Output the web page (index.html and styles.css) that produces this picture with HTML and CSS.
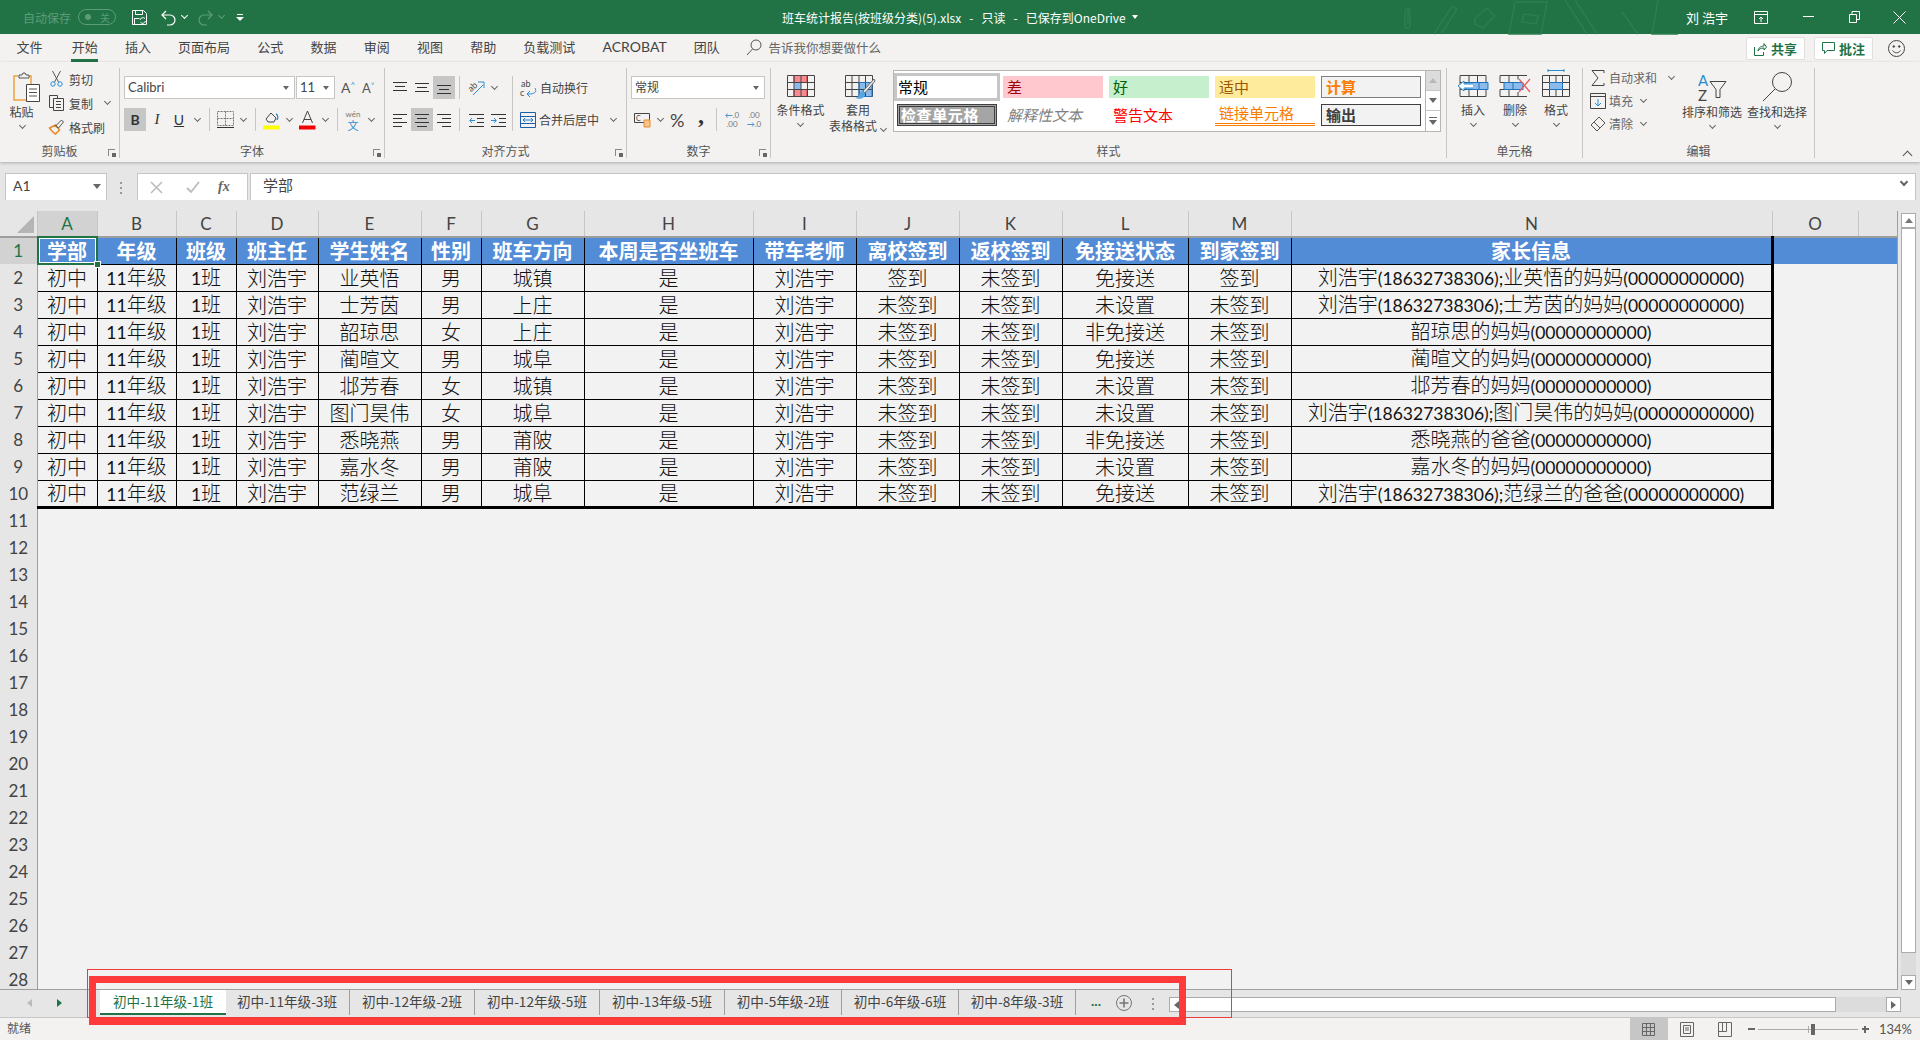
FILE: index.html
```html
<!DOCTYPE html>
<html lang="zh-CN">
<head>
    <meta charset="UTF-8">
    <meta name="viewport" content="width=device-width, initial-scale=1.0">
    <title>班车统计报告</title>
    <link rel="stylesheet" href="styles.css">
</head>
<body>
    <header class="titlebar">
        <svg class="doodles" width="330" height="34" viewBox="0 0 330 34" fill="none" stroke="#2c7d50" stroke-width="1.5">
            <path d="M10 8c-4 0-5 3-5 6v12c0 3 5 3 5 0V11c0-2-2-2-2 0v12"/>
            <path d="M34 34L52 6l5 3-16 25"/>
            <path d="M75 18l12-10 8 8-12 12-8-4z"/>
            <path d="M115 2h32l-6 32h-32z"/>
            <path d="M124 14l14 2-2 8-14-2z"/>
            <path d="M165 0l22 34M175 0l22 34"/>
            <path d="M222 12l16 22M258 0l-6 34h26"/>
        </svg>
        <div class="qat">
            <span class="autosave">自动保存</span>
            <span class="toggle"><i></i><b>关</b></span>
            <svg class="qat-save" width="17" height="17" viewBox="0 0 17 17" fill="none" stroke="#fff"><path d="M1.5 1.5h11l3 3v11h-14zM4.500 1.500v4h7v-4M3.500 15.500v-6h5"/><path d="M9 11a3 3 0 0 1 5-1.500M14.500 12a3 3 0 0 1-5 1.500" stroke="#fff"/></svg>
            <svg class="qat-undo" width="17" height="17" viewBox="0 0 17 17" fill="none" stroke="#fff" stroke-width="1.2"><path d="M6 2L2 6l4 4M2 6h8a4.500 4.500 0 0 1 0 10H7"/></svg>
            <span class="chev chev-w"></span>
            <svg class="qat-redo" width="17" height="17" viewBox="0 0 17 17" fill="none" stroke="#5d9c78" stroke-width="1.2"><path d="M11 2l4 4-4 4M15 6H7a4.500 4.500 0 0 0 0 10h3"/></svg>
            <span class="chev chev-dim"></span>
            <svg class="qat-more" width="8" height="8" viewBox="0 0 8 8" fill="#fff"><path d="M1 1h6v1H1zM0 4h8L4 8z"/></svg>
        </div>
        <div class="doc-title">班车统计报告(按班级分类)(5).xlsx&nbsp;&nbsp; - &nbsp;&nbsp;只读&nbsp;&nbsp; - &nbsp;&nbsp;已保存到OneDrive<svg width="6" height="4" viewBox="0 0 6 4" fill="#fff"><path d="M0 0h6L3 4z"/></svg></div>
        <div class="acct">
            <span class="acct-name">刘 浩宇</span>
            <svg class="acct-disp" width="15" height="13" viewBox="0 0 15 13" fill="none" stroke="#fff"><path d="M.5.5h13v12H.5zM.5 3.500h13M7 11V6M5 8l2-2 2 2"/></svg>
            <svg class="acct-min" width="11" height="2" viewBox="0 0 11 2" fill="#fff"><path d="M0 0h11v1H0z"/></svg>
            <svg class="acct-max" width="11" height="12" viewBox="0 0 11 12" fill="none" stroke="#fff"><path d="M.5 3.500h7v8h-7zM3 3.500V.5h7.500v8H8"/></svg>
            <svg class="acct-close" width="13" height="13" viewBox="0 0 13 13" fill="none" stroke="#fff"><path d="M.5.5l12 12M12.500.5l-12 12"/></svg>
        </div>
    </header>

    <nav class="tabstrip">
        <a class="rtab rtab-first">文件</a>
        <a class="rtab rtab-on">开始</a>
        <a class="rtab">插入</a>
        <a class="rtab">页面布局</a>
        <a class="rtab">公式</a>
        <a class="rtab">数据</a>
        <a class="rtab">审阅</a>
        <a class="rtab">视图</a>
        <a class="rtab">帮助</a>
        <a class="rtab">负载测试</a>
        <a class="rtab rtab-latin">ACROBAT</a>
        <a class="rtab">团队</a>
        <div class="tell">
            <svg width="16" height="17" viewBox="0 0 16 17" fill="none" stroke="#555"><circle cx="10" cy="6" r="5"/><path d="M6.500 10L1 16"/></svg>
            告诉我你想要做什么
        </div>
        <div class="tab-right">
            <button class="pill">
                <svg width="13" height="14" viewBox="0 0 13 14" fill="none" stroke="#217346"><path d="M.5 5v8.500h9V10M4 9c0-3 3-5 6-5V1.500L12.500 5 10 8V6C7 6 5 7 4 9z"/></svg>
                共享
            </button>
            <button class="pill">
                <svg width="13" height="13" viewBox="0 0 13 13" fill="none" stroke="#217346"><path d="M.5.5h12v8H5L2.500 11.500V8.500h-2z"/></svg>
                批注
            </button>
            <svg class="smile" width="17" height="17" viewBox="0 0 17 17" fill="none" stroke="#444"><circle cx="8.500" cy="8.500" r="8"/><circle cx="5.800" cy="6.500" r=".8" fill="#444"/><circle cx="11.200" cy="6.500" r=".8" fill="#444"/><path d="M4.500 10.500c2 3 6 3 8 0"/></svg>
        </div>
    </nav>

    <section class="ribbon">
        <div class="group g-clip">
            <div class="g-body g-body-clip">
                <div class="paste">
                    <svg width="28" height="30" viewBox="0 0 28 30" fill="none">
                        <path d="M5 4H1v24h14" stroke="#f0a23c" stroke-width="1.500"/>
                        <path d="M16 4h2v8" stroke="#f0a23c" stroke-width="1.500"/>
                        <path d="M6 5V3h3l1-2h2l1 2h3v3H6z" stroke="#555" fill="#f3f2f1"/>
                        <path d="M13.500 12.500h13v17h-13z" stroke="#444" fill="#fff"/>
                        <path d="M16 17h8M16 20.500h8M16 24h8" stroke="#555"/>
                    </svg>
                    <span>粘贴</span>
                    <span class="chev"></span>
                </div>
                <div class="clip-list">
                    <div class="clip-item">
                        <svg width="14" height="16" viewBox="0 0 14 16" fill="none" stroke="#555"><path d="M3 0l6 11M11 0L5 11"/><circle cx="3.500" cy="13" r="2.200" stroke="#2a8dd4"/><circle cx="10.500" cy="13" r="2.200" stroke="#2a8dd4"/></svg>
                        剪切
                    </div>
                    <div class="clip-item">
                        <svg width="15" height="16" viewBox="0 0 15 16" fill="none" stroke="#444"><path d="M.5.5h8v12h-8z"/><path d="M4.500 3.500h10v12h-10z" fill="#f3f2f1"/><path d="M7 6.500h5M7 9.500h5M7 12.500h5"/></svg>
                        复制<span class="chev chev-gap"></span>
                    </div>
                    <div class="clip-item">
                        <svg width="16" height="16" viewBox="0 0 16 16" fill="none"><path d="M1 9l6-3 4 5-4 4c-2-1-4-3-6-6z" stroke="#ea8a2a" stroke-width="1.500"/><path d="M7 7l6-6 2 2-5 6z" stroke="#555"/></svg>
                        格式刷
                    </div>
                </div>
            </div>
            <div class="g-label">剪贴板<i class="launch"></i></div>
        </div>

        <div class="group g-font">
            <div class="g-body stack">
                <div class="row">
                    <div class="combo combo-font">Calibri</div>
                    <div class="combo combo-size">11</div>
                    <span class="grow-a">A<sup>^</sup></span>
                    <span class="grow-a shrink-a">A<sup>˅</sup></span>
                </div>
                <div class="row">
                    <span class="tb tb-on tb-b">B</span>
                    <span class="tb tb-i">I</span>
                    <span class="tb tb-u">U</span>
                    <span class="chev chev-s"></span>
                    <i class="vsep"></i>
                    <span class="tb">
                        <svg width="17" height="17" viewBox="0 0 17 17" fill="none" stroke="#777" stroke-dasharray="2 1"><path d="M.5.5h16v14H.5zM8.500.5v14M.5 7.500h16"/><path d="M0 16.500h17" stroke="#333" stroke-dasharray="none"/></svg>
                    </span>
                    <span class="chev chev-s"></span>
                    <i class="vsep"></i>
                    <span class="tb">
                        <svg width="17" height="20" viewBox="0 0 17 20" fill="none"><path d="M3 9l5-6 5 5-2 4H5z" stroke="#444"/><path d="M13 4c2 1 2 4 1 6" stroke="#2a8dd4" stroke-width="1.500"/><path d="M0 15.500h16.500v4H0z" fill="#ffff00"/></svg>
                    </span>
                    <span class="chev chev-s"></span>
                    <span class="tb">
                        <svg width="17" height="20" viewBox="0 0 17 20" fill="none" stroke="#444"><path d="M3.500 13l5-12 5 12M5 9.500h7"/><path d="M0 15.500h16.500v4H0z" fill="#f00000" stroke="none"/></svg>
                    </span>
                    <span class="chev chev-s"></span>
                    <i class="vsep"></i>
                    <span class="tb tb-wen"><small>wén</small><em>文</em></span>
                    <span class="chev chev-s"></span>
                </div>
            </div>
            <div class="g-label">字体<i class="launch"></i></div>
        </div>

        <div class="group g-align">
            <div class="g-body stack">
                <div class="row">
                    <span class="tb"><svg width="16" height="14" viewBox="0 0 16 14" stroke="#333"><path d="M1 1.500h14M3 5.500h10M1 9.500h14"/></svg></span>
                    <span class="tb"><svg width="16" height="14" viewBox="0 0 16 14" stroke="#333"><path d="M1 2.500h14M3 6.500h10M1 10.500h14"/></svg></span>
                    <span class="tb tb-on"><svg width="16" height="14" viewBox="0 0 16 14" stroke="#333"><path d="M1 4.500h14M3 8.500h10M1 12.500h14"/></svg></span>
                    <i class="vsep vsep-a"></i>
                    <span class="tb"><svg width="18" height="18" viewBox="0 0 18 18" fill="none"><text x="0" y="11" font-size="9" fill="#444" transform="rotate(-45 5 7)" font-family="Lato, sans-serif">ab</text><path d="M6 16L16 6M11 3h6v6" stroke="#2a8dd4"/></svg></span>
                    <span class="chev chev-s"></span>
                    <i class="vsep vsep-b"></i>
                    <span class="tb-text">
                        <svg width="17" height="18" viewBox="0 0 17 18" fill="none"><text x="1" y="8" font-size="9" fill="#444" font-family="Lato, sans-serif">ab</text><text x="0" y="17" font-size="9" fill="#444" font-family="Lato, sans-serif">c</text><path d="M15 9c2 4 0 6-7 6M10 12l-3 3 3 3" stroke="#2a8dd4"/></svg>
                        自动换行
                    </span>
                </div>
                <div class="row">
                    <span class="tb"><svg width="16" height="14" viewBox="0 0 16 14" stroke="#333"><path d="M1 1.500h14M1 5.500h9M1 9.500h14M1 13.500h9"/></svg></span>
                    <span class="tb tb-on"><svg width="16" height="14" viewBox="0 0 16 14" stroke="#333"><path d="M1 1.500h14M3 5.500h10M1 9.500h14M3 13.500h10"/></svg></span>
                    <span class="tb"><svg width="16" height="14" viewBox="0 0 16 14" stroke="#333"><path d="M1 1.500h14M6 5.500h9M1 9.500h14M6 13.500h9"/></svg></span>
                    <i class="vsep vsep-a"></i>
                    <span class="tb"><svg width="15" height="14" viewBox="0 0 15 14" fill="none" stroke="#333"><path d="M0 1.500h15M8 5.500h7M8 9.500h7M0 13.500h15"/><path d="M6 7.500H1M3 5L.8 7.500 3 10" stroke="#2a8dd4"/></svg></span>
                    <span class="tb"><svg width="15" height="14" viewBox="0 0 15 14" fill="none" stroke="#333"><path d="M0 1.500h15M8 5.500h7M8 9.500h7M0 13.500h15"/><path d="M0 7.500h5M3 5l2.200 2.500L3 10" stroke="#2a8dd4"/></svg></span>
                    <i class="vsep vsep-c"></i>
                    <span class="tb-text">
                        <svg width="16" height="16" viewBox="0 0 16 16" fill="none" stroke="#1c5fa8"><path d="M.5.5h15v15H.5zM.5 4.500h15M.5 11.500h15"/><path d="M3 8h10M5 6L3 8l2 2M11 6l2 2-2 2" stroke="#1c7fd0"/></svg>
                        合并后居中<span class="chev chev-merge"></span>
                    </span>
                </div>
            </div>
            <div class="g-label">对齐方式<i class="launch"></i></div>
        </div>

        <div class="group g-num">
            <div class="g-body stack">
                <div class="row"><div class="combo combo-num">常规</div></div>
                <div class="row">
                    <span class="tb tb-acct">
                        <svg width="17" height="17" viewBox="0 0 17 17" fill="none"><path d="M.5 2.500h15v9H.5z" stroke="#444"/><text x="2" y="10" font-size="7" fill="#444" font-family="Lato, sans-serif">C</text><path d="M10 9h6v7h-6z" fill="#f6c48e" stroke="#e98a25"/></svg>
                    </span>
                    <span class="chev chev-acct"></span>
                    <span class="pct">%</span>
                    <span class="comma">,</span>
                    <i class="vsep vsep-d"></i>
                    <span class="dec"><b>←</b>.0<br>.00</span>
                    <span class="dec">.00<br><b>→</b>.0</span>
                </div>
            </div>
            <div class="g-label">数字<i class="launch"></i></div>
        </div>

        <div class="group g-style">
            <div class="g-body g-body-style">
                <div class="big big-cond">
                    <svg width="28" height="22" viewBox="0 0 28 22" fill="none">
                        <path d="M7 .5h13v7H7zM7 14.500h13v7H7z" fill="#f8898f" stroke="#c8323c"/>
                        <path d="M7 7.500h7v7H7z" fill="#8bbbec"/>
                        <path d="M.5.5h27v21H.5zM.5 7.500h27M.5 14.500h27M7 .5v21M14 .5v21M20.500.5v21" stroke="#444"/>
                    </svg>
                    <span class="big-text">条件格式</span>
                    <span class="chev"></span>
                </div>
                <div class="big big-table">
                    <svg width="30" height="26" viewBox="0 0 30 26" fill="none">
                        <path d="M14 7.500h13v14H14z" fill="#8bbbec"/>
                        <path d="M.5.5h27v21H.5zM.5 7.500h27M.5 14.500h27M7 .5v21M14 .5v21M20.500.5v21" stroke="#444"/>
                        <path d="M14 7.500h13v14H14z" stroke="#1f72bd"/>
                        <path d="M29 4L18 16l2 2L30 6z" fill="#e9e9e9" stroke="#666"/>
                        <path d="M18 16c-4 0-2 6-8 7 5 2 11 0 10-5z" fill="#58a5e4"/>
                    </svg>
                    <span class="big-text"><span class="tb-top">套用</span><br>表格格式<span class="chev chev-inline"></span></span>
                </div>
                <div class="gallery">
                    <div class="st st-normal">常规</div>
                    <div class="st st-bad">差</div>
                    <div class="st st-good">好</div>
                    <div class="st st-neutral">适中</div>
                    <div class="st st-calc">计算</div>
                    <div class="st st-check">检查单元格</div>
                    <div class="st st-note">解释性文本</div>
                    <div class="st st-warn">警告文本</div>
                    <div class="st st-link">链接单元格</div>
                    <div class="st st-out">输出</div>
                </div>
                <div class="gal-scroll">
                    <span class="gal-btn gal-off"><i class="tri-up"></i></span>
                    <span class="gal-btn"><i class="tri-down"></i></span>
                    <span class="gal-btn gal-last"><i class="tri-down tri-bar"></i></span>
                </div>
            </div>
            <div class="g-label">样式</div>
        </div>

        <div class="group g-cells">
            <div class="g-body g-body-cells">
                <div class="big big-cell">
                    <svg width="32" height="22" viewBox="0 0 32 22" fill="none">
                        <path d="M3 .5h26v21H3zM3 7.500h26M3 14.500h26M12 .5v21M20.500.5v21" stroke="#444"/>
                        <path d="M9 7.500h22v7H9z" fill="#8bbbec" stroke="#1f72bd"/>
                        <path d="M22 7v8" stroke="#1f72bd"/>
                        <path d="M16 9H7V6l-6 5 6 5v-3h9" fill="#fff" stroke="#2a8dd4"/>
                    </svg>
                    <span class="big-text">插入</span>
                    <span class="chev"></span>
                </div>
                <div class="big big-cell">
                    <svg width="32" height="22" viewBox="0 0 32 22" fill="none">
                        <path d="M1 .5h27M1 21.500h27M1 .5v7M1 14.500v7M1 7.500h4M1 14.500h4M10 .5v7M10 14.500v7M19 .5v4M19 17v4.500" stroke="#444"/>
                        <path d="M5 7.500h19v7H5z" fill="#8bbbec" stroke="#1f72bd"/>
                        <path d="M14 7v8" stroke="#1f72bd"/>
                        <path d="M20 4l11 13M31 4L20 17" stroke="#ee5a5a" stroke-width="1.300"/>
                    </svg>
                    <span class="big-text">删除</span>
                    <span class="chev"></span>
                </div>
                <div class="big big-cell big-fmt">
                    <svg width="28" height="28" viewBox="0 0 28 28" fill="none">
                        <path d="M6 1.500h16M6 0v3M22 0v3" stroke="#2a8dd4"/>
                        <path d="M.5 6.500h27v21H.5zM.5 13.500h27M.5 20.500h27M7.500 6.500v21M20.500 6.500v21M14 20.500v7M14 6.500v7" stroke="#444"/>
                        <path d="M7.500 13.500h13v7h-13z" fill="#8bbbec" stroke="#1f72bd"/>
                    </svg>
                    <span class="big-text">格式</span>
                    <span class="chev"></span>
                </div>
            </div>
            <div class="g-label">单元格</div>
        </div>

        <div class="group g-edit">
            <div class="g-body g-body-edit">
                <div class="edit-list">
                    <div class="edit-item">
                        <svg width="14" height="16" viewBox="0 0 14 16" fill="none" stroke="#444"><path d="M13 3V.5H1L7 8l-6 7.500h12V13"/></svg>
                        <span class="dim">自动求和</span><span class="chev chev-gap2"></span>
                    </div>
                    <div class="edit-item">
                        <svg width="16" height="16" viewBox="0 0 16 16" fill="none" stroke="#444"><path d="M.5.5h15v15H.5zM.5 3.500h15"/><path d="M8 6v7M5 10l3 3 3-3" stroke="#2a8dd4"/></svg>
                        <span class="dim">填充</span><span class="chev chev-s"></span>
                    </div>
                    <div class="edit-item">
                        <svg width="16" height="16" viewBox="0 0 16 16" fill="none" stroke="#555"><path d="M1 9l8-8 6 6-8 8zM4 6l6 6"/></svg>
                        <span class="dim">清除</span><span class="chev chev-s"></span>
                    </div>
                </div>
                <div class="big big-sort">
                    <svg width="30" height="30" viewBox="0 0 30 30" fill="none">
                        <text x="1" y="14" font-size="15" fill="#2a8dd4" font-family="Lato, sans-serif">A</text>
                        <text x="1" y="29" font-size="15" fill="#444" font-family="Lato, sans-serif">Z</text>
                        <path d="M13 9.500h16l-6 8v8h-4v-8z" stroke="#444"/>
                    </svg>
                    <span class="big-text">排序和筛选</span>
                    <span class="chev"></span>
                </div>
                <div class="big big-find">
                    <svg width="30" height="30" viewBox="0 0 30 30" fill="none" stroke="#444"><circle cx="20" cy="10" r="9.500"/><path d="M13 17L1 29"/></svg>
                    <span class="big-text">查找和选择</span>
                    <span class="chev"></span>
                </div>
            </div>
            <div class="g-label">编辑</div>
        </div>
        <span class="ribbon-fold"></span>
    </section>

    <section class="formula">
        <div class="namebox">A1<i class="tri-down tri-name"></i></div>
        <span class="grip"></span>
        <div class="fx-box">
            <svg width="13" height="13" viewBox="0 0 13 13" stroke="#bbb" stroke-width="1.500"><path d="M1 1l11 11M12 1L1 12"/></svg>
            <svg width="14" height="13" viewBox="0 0 14 13" fill="none" stroke="#bbb" stroke-width="1.800"><path d="M1 7l4 4 8-10"/></svg>
            <em>fx</em>
        </div>
        <div class="fx-input">学部<span class="fx-more"></span></div>
    </section>

    <main class="sheet">
        <div class="grid-wrap">
            <table class="grid">
                <colgroup>
                    <col class="c-h"><col class="c-60"><col class="c-79"><col class="c-60"><col class="c-82"><col class="c-103"><col class="c-60"><col class="c-103"><col class="c-169"><col class="c-103"><col class="c-103"><col class="c-103"><col class="c-126"><col class="c-103"><col class="c-481"><col class="c-86"><col>
                </colgroup>
                <thead>
                    <tr>
                        <th class="corner"><i></i></th>
                        <th class="col col-on">A</th><th class="col">B</th><th class="col">C</th><th class="col">D</th><th class="col">E</th><th class="col">F</th><th class="col">G</th><th class="col">H</th><th class="col">I</th><th class="col">J</th><th class="col">K</th><th class="col">L</th><th class="col">M</th><th class="col">N</th><th class="col">O</th><th class="col col-end"></th>
                    </tr>
                </thead>
                <tbody>
                    <tr class="head">
                        <th class="rh rh-on">1</th>
                        <td class="sel-cell">学部<span class="sel"><i></i></span></td><td>年级</td><td>班级</td><td>班主任</td><td>学生姓名</td><td>性别</td><td>班车方向</td><td>本周是否坐班车</td><td>带车老师</td><td>离校签到</td><td>返校签到</td><td>免接送状态</td><td>到家签到</td><td class="last">家长信息</td><td class="out"></td><td class="out"></td>
                    </tr>
                    <tr class="d"><th class="rh">2</th><td>初中</td><td><span class="n">11</span>年级</td><td><span class="n">1</span>班</td><td>刘浩宇</td><td>业英悟</td><td>男</td><td>城镇</td><td>是</td><td>刘浩宇</td><td>签到</td><td>未签到</td><td>免接送</td><td>签到</td><td class="last">刘浩宇<span class="n">(18632738306);</span>业英悟的妈妈<span class="n">(00000000000)</span></td></tr>
                    <tr class="d"><th class="rh">3</th><td>初中</td><td><span class="n">11</span>年级</td><td><span class="n">1</span>班</td><td>刘浩宇</td><td>士芳茵</td><td>男</td><td>上庄</td><td>是</td><td>刘浩宇</td><td>未签到</td><td>未签到</td><td>未设置</td><td>未签到</td><td class="last">刘浩宇<span class="n">(18632738306);</span>士芳茵的妈妈<span class="n">(00000000000)</span></td></tr>
                    <tr class="d"><th class="rh">4</th><td>初中</td><td><span class="n">11</span>年级</td><td><span class="n">1</span>班</td><td>刘浩宇</td><td>韶琼思</td><td>女</td><td>上庄</td><td>是</td><td>刘浩宇</td><td>未签到</td><td>未签到</td><td>非免接送</td><td>未签到</td><td class="last">韶琼思的妈妈<span class="n">(00000000000)</span></td></tr>
                    <tr class="d"><th class="rh">5</th><td>初中</td><td><span class="n">11</span>年级</td><td><span class="n">1</span>班</td><td>刘浩宇</td><td>蔺暄文</td><td>男</td><td>城阜</td><td>是</td><td>刘浩宇</td><td>未签到</td><td>未签到</td><td>免接送</td><td>未签到</td><td class="last">蔺暄文的妈妈<span class="n">(00000000000)</span></td></tr>
                    <tr class="d"><th class="rh">6</th><td>初中</td><td><span class="n">11</span>年级</td><td><span class="n">1</span>班</td><td>刘浩宇</td><td>邶芳春</td><td>女</td><td>城镇</td><td>是</td><td>刘浩宇</td><td>未签到</td><td>未签到</td><td>未设置</td><td>未签到</td><td class="last">邶芳春的妈妈<span class="n">(00000000000)</span></td></tr>
                    <tr class="d"><th class="rh">7</th><td>初中</td><td><span class="n">11</span>年级</td><td><span class="n">1</span>班</td><td>刘浩宇</td><td>图门昊伟</td><td>女</td><td>城阜</td><td>是</td><td>刘浩宇</td><td>未签到</td><td>未签到</td><td>未设置</td><td>未签到</td><td class="last">刘浩宇<span class="n">(18632738306);</span>图门昊伟的妈妈<span class="n">(00000000000)</span></td></tr>
                    <tr class="d"><th class="rh">8</th><td>初中</td><td><span class="n">11</span>年级</td><td><span class="n">1</span>班</td><td>刘浩宇</td><td>悉晓燕</td><td>男</td><td>莆陂</td><td>是</td><td>刘浩宇</td><td>未签到</td><td>未签到</td><td>非免接送</td><td>未签到</td><td class="last">悉晓燕的爸爸<span class="n">(00000000000)</span></td></tr>
                    <tr class="d"><th class="rh">9</th><td>初中</td><td><span class="n">11</span>年级</td><td><span class="n">1</span>班</td><td>刘浩宇</td><td>嘉水冬</td><td>男</td><td>莆陂</td><td>是</td><td>刘浩宇</td><td>未签到</td><td>未签到</td><td>未设置</td><td>未签到</td><td class="last">嘉水冬的妈妈<span class="n">(00000000000)</span></td></tr>
                    <tr class="d d-end"><th class="rh">10</th><td>初中</td><td><span class="n">11</span>年级</td><td><span class="n">1</span>班</td><td>刘浩宇</td><td>范绿兰</td><td>男</td><td>城阜</td><td>是</td><td>刘浩宇</td><td>未签到</td><td>未签到</td><td>免接送</td><td>未签到</td><td class="last">刘浩宇<span class="n">(18632738306);</span>范绿兰的爸爸<span class="n">(00000000000)</span></td></tr>
                    <tr><th class="rh">11</th></tr><tr><th class="rh">12</th></tr><tr><th class="rh">13</th></tr><tr><th class="rh">14</th></tr><tr><th class="rh">15</th></tr><tr><th class="rh">16</th></tr>
                    <tr><th class="rh">17</th></tr><tr><th class="rh">18</th></tr><tr><th class="rh">19</th></tr><tr><th class="rh">20</th></tr><tr><th class="rh">21</th></tr><tr><th class="rh">22</th></tr>
                    <tr><th class="rh">23</th></tr><tr><th class="rh">24</th></tr><tr><th class="rh">25</th></tr><tr><th class="rh">26</th></tr><tr><th class="rh">27</th></tr><tr><th class="rh">28</th></tr>
                </tbody>
            </table>
        </div>
        <div class="vscroll">
            <span class="sb-btn"><i class="tri-up"></i></span>
            <span class="sb-thumb"></span>
            <span class="sb-track"></span>
            <span class="sb-btn"><i class="tri-down"></i></span>
        </div>
    </main>

    <section class="sheetbar">
        <div class="sheet-nav"><i class="tri-l tri-dim"></i><i class="tri-r"></i></div>
        <a class="stab stab-on">初中-11年级-1班</a>
        <a class="stab">初中-11年级-3班</a>
        <a class="stab">初中-12年级-2班</a>
        <a class="stab">初中-12年级-5班</a>
        <a class="stab">初中-13年级-5班</a>
        <a class="stab stab-s">初中-5年级-2班</a>
        <a class="stab stab-s">初中-6年级-6班</a>
        <a class="stab stab-s">初中-8年级-3班</a>
        <span class="stab-more">...</span>
        <svg class="stab-add" width="16" height="16" viewBox="0 0 16 16" fill="none" stroke="#777"><circle cx="8" cy="8" r="7.500"/><path d="M8 3.500v9M3.500 8h9" stroke-width="1.600"/></svg>
        <span class="grip grip-s"></span>
        <div class="hscroll">
            <span class="hs-btn"><i class="tri-l"></i></span>
            <span class="hs-thumb"></span>
            <span class="hs-track"></span>
            <span class="hs-btn"><i class="tri-r tri-grey"></i></span>
        </div>
    </section>

    <footer class="status">
        <span class="ready">就绪</span>
        <div class="status-right">
            <span class="view view-on"><svg width="13" height="13" viewBox="0 0 13 13" fill="none" stroke="#666"><path d="M.5.5h12v12H.5zM4.500.5v12M8.500.5v12M.5 4.500h12M.5 8.500h12"/></svg></span>
            <span class="view"><svg width="14" height="15" viewBox="0 0 14 15" fill="none" stroke="#666"><path d="M.5.5h13v14H.5zM3.500 3.500h7v8h-7zM5 6h4M5 8h4"/></svg></span>
            <span class="view"><svg width="14" height="15" viewBox="0 0 14 15" fill="none" stroke="#666"><path d="M.5.5h13v14H.5zM.5 9.500h8V.5M4.500.5v9"/></svg></span>
            <span class="zoom-minus"></span>
            <span class="zoom-track"><i class="zoom-tick"></i><i class="zoom-knob"></i></span>
            <span class="zoom-plus"></span>
            <span class="zoom-val">134%</span>
        </div>
    </footer>

    <div class="mark mark-thin"></div>
    <div class="mark mark-thick"></div>
</body>
</html>
```

FILE: styles.css
```css
* {
    box-sizing: border-box;
}
html, body {
    margin: 0;
    height: 100%;
}
body {
    position: relative;
    display: flex;
    flex-direction: column;
    height: 1040px;
    overflow: hidden;
    background-color: #e6e6e6;
    font-family: "Noto Sans CJK SC", "Liberation Sans", sans-serif;
    font-size: 12px;
    color: #444;
}
svg {
    display: block;
    flex: none;
    overflow: visible;
}

/* title bar */
.titlebar {
    position: relative;
    display: flex;
    align-items: center;
    flex: none;
    height: 34px;
    background-color: #217346;
    color: #fff;
}
.doodles {
    position: absolute;
    left: 1400px;
    top: 0;
}
.qat {
    display: flex;
    align-items: center;
    width: 782px;
    padding-left: 23px;
    flex: none;
}
.autosave {
    color: #5d9c78;
    font-size: 12px;
    width: 55px;
}
.toggle {
    display: flex;
    align-items: center;
    justify-content: space-between;
    width: 38px;
    height: 16px;
    padding: 0 5px 0 6px;
    border: 1px solid #5d9c78;
    border-radius: 8px;
    color: #5d9c78;
    font-size: 10px;
}
.toggle i {
    width: 6px;
    height: 6px;
    border-radius: 50%;
    background-color: #5d9c78;
}
.toggle b {
    font-weight: 400;
}
.qat-save {
    margin-left: 15px;
}
.qat-undo {
    margin-left: 12px;
}
.qat-redo {
    margin-left: 7px;
}
.qat-more {
    margin-left: 9px;
}
.doc-title {
    display: flex;
    align-items: center;
    gap: 6px;
    white-space: nowrap;
    font-size: 12px;
}
.acct {
    display: flex;
    align-items: center;
    margin-left: auto;
    padding-right: 14px;
}
.acct-name {
    font-size: 13px;
    margin-right: 26px;
}
.acct-min {
    margin-left: 34px;
}
.acct-max {
    margin-left: 35px;
}
.acct-close {
    margin-left: 33px;
}

/* ribbon tabs */
.tabstrip {
    display: flex;
    align-items: flex-start;
    flex: none;
    height: 28px;
    padding-left: 3px;
    background-color: #f3f2f1;
    font-size: 13px;
    color: #444;
}
.rtab {
    position: relative;
    height: 28px;
    padding: 4px 13.6px 0;
    line-height: 18px;
}
.rtab-first {
    padding-right: 15.5px;
}
.rtab-latin {
    font-family: Lato, sans-serif;
    font-size: 14px;
}
.rtab-on::after {
    content: "";
    position: absolute;
    left: 13px;
    right: 13px;
    bottom: 0;
    height: 3px;
    background-color: #217346;
}
.tell {
    display: flex;
    align-items: center;
    gap: 6px;
    margin-left: 13px;
    height: 26px;
    font-size: 12.500px;
    color: #666;
}
.tab-right {
    display: flex;
    align-items: flex-start;
    gap: 9px;
    margin-left: auto;
    height: 28px;
    padding: 3px 15px 0 0;
}
.pill {
    display: flex;
    align-items: center;
    justify-content: center;
    gap: 4px;
    width: 59px;
    height: 23px;
    padding: 0;
    background-color: #fff;
    border: 1px solid #e1dfdd;
    border-radius: 2px;
    color: #217346;
    font: 700 13px "Noto Sans CJK SC", sans-serif;
}
.smile {
    margin: 3px 0 0 6px;
}

/* ribbon */
.ribbon {
    position: relative;
    display: flex;
    flex: none;
    height: 100px;
    background-color: #f3f2f1;
    box-shadow: 0 1px 3px rgba(0, 0, 0, 0.25);
    z-index: 1;
}
.group {
    display: flex;
    flex-direction: column;
    flex: none;
    height: 90px;
    margin-top: 6px;
    border-right: 1px solid #c8c6c4;
}
.g-clip { width: 120px; }
.g-font { width: 265px; padding-left: 4px; }
.g-align { width: 242px; padding-left: 4px; }
.g-num { width: 144px; padding-left: 4px; }
.g-style { width: 676px; }
.g-cells { width: 136px; }
.g-edit { width: 232px; }
.g-body {
    flex: 1;
    min-height: 0;
}
.g-label {
    position: relative;
    height: 16px;
    line-height: 16px;
    text-align: center;
    font-size: 12px;
    color: #555;
    margin-bottom: -1px;
}
.g-font .g-label { margin-left: -4px; }
.g-align .g-label { margin-left: -4px; }
.g-num .g-label { margin-left: -4px; }
.launch {
    position: absolute;
    right: 4px;
    top: 6px;
    width: 7px;
    height: 7px;
    border-left: 1px solid #888;
    border-top: 1px solid #888;
}
.launch::after {
    content: "";
    position: absolute;
    right: -1px;
    bottom: -1px;
    width: 4px;
    height: 4px;
    background-color: #666;
}
.stack {
    display: flex;
    flex-direction: column;
    gap: 9px;
    padding-top: 8px;
}
.row {
    display: flex;
    align-items: center;
    height: 23px;
}
.chev {
    display: flex;
    align-items: center;
    justify-content: center;
    flex: none;
    width: 12px;
    height: 10px;
}
.chev::before {
    content: "";
    width: 4px;
    height: 4px;
    margin-top: -3px;
    border-right: 1px solid #666;
    border-bottom: 1px solid #666;
    transform: rotate(45deg);
}
.chev-w::before { border-color: #fff; }
.chev-dim::before { border-color: #5d9c78; }
.chev-w { margin-left: 1px; }
.chev-dim { margin-left: 1px; }
.chev-s { margin: 0 1px; }
.chev-gap { margin-left: 4px; }
.chev-gap2 { margin-left: 5px; }
.chev-merge { margin-left: 5px; }
.chev-acct { margin-left: 1px; }
.chev-inline {
    display: inline-flex;
    margin-right: -12px;
}
.tb {
    display: flex;
    align-items: center;
    justify-content: center;
    flex: none;
    width: 22px;
    height: 23px;
}
.tb-top {
    padding-left: 10px;
}
.tb-on {
    background-color: #c6c6c6;
}
.tb-b {
    font: 700 14px Lato, sans-serif;
    color: #333;
}
.tb-i {
    font: italic 400 15px "Liberation Serif", serif;
    color: #333;
}
.tb-u {
    font: 400 14px Lato, sans-serif;
    color: #333;
    text-decoration: underline;
}
.tb-wen {
    flex-direction: column;
    line-height: 8px;
    color: #2a8dd4;
}
.tb-wen small {
    font: 8px Lato, sans-serif;
    color: #777;
}
.tb-wen em {
    font-style: normal;
    font-size: 11px;
    line-height: 12px;
}
.vsep {
    flex: none;
    width: 1px;
    height: 23px;
    margin: 0 4px 0 5px;
    background-color: #c8c6c4;
}
.vsep-a { margin: 0 5px 0 4px; }
.vsep-b { height: 55px; margin: 0 7px 0 11px; align-self: flex-start; }
.vsep-c { width: 0; margin: 0 11px 0 0; background: none; }
.vsep-d { margin: 0 4px 0 9px; }
.combo {
    position: relative;
    height: 23px;
    padding-left: 3px;
    background-color: #fff;
    border: 1px solid #c6c6c6;
    font: 13px/21px Lato, "Noto Sans CJK SC", sans-serif;
    color: #444;
}
.combo::after {
    content: "";
    position: absolute;
    right: 5px;
    top: 9px;
    border: 3px solid transparent;
    border-top: 4px solid #666;
    border-bottom: 0;
}
.combo-font { width: 171px; }
.combo-size { width: 39px; margin-left: 1px; }
.combo-num { width: 134px; font-size: 12px; }
.grow-a {
    margin-left: 6px;
    width: 18px;
    font: 14px Lato, sans-serif;
    color: #555;
}
.shrink-a {
    margin-left: 3px;
    font-size: 13px;
}
.grow-a sup {
    font-size: 8px;
    color: #2a8dd4;
    vertical-align: 5px;
    line-height: 0;
}
.tb-text {
    display: flex;
    align-items: center;
    gap: 3px;
    white-space: nowrap;
    font-size: 12px;
}
.pct {
    margin-left: 4px;
    font: 18px Lato, sans-serif;
    color: #444;
    width: 20px;
}
.comma {
    width: 12px;
    margin: -8px 0 0 5px;
    font: 900 24px "Liberation Serif", serif;
    color: #333;
    text-align: center;
}
.dec {
    width: 22px;
    font: 8px/9px Lato, sans-serif;
    color: #777;
    text-align: center;
}
.dec b {
    color: #1c7fd0;
    font-weight: 400;
}
.g-body-clip {
    display: flex;
}
.paste {
    display: flex;
    flex-direction: column;
    align-items: center;
    width: 48px;
    padding-top: 4px;
    line-height: 16px;
}
.paste span:not(.chev) {
    margin: 2px 5px 0 0;
}
.paste svg {
    margin-left: 6px;
}
.paste .chev {
    margin: 2px 4px 0 0;
}
.clip-list {
    display: flex;
    flex-direction: column;
    margin-top: -1px;
}
.clip-item {
    display: flex;
    align-items: center;
    gap: 4px;
    height: 24px;
    white-space: nowrap;
}
.clip-item svg {
    width: 17px;
}

/* styles gallery */
.g-body-style {
    display: flex;
}
.big {
    display: flex;
    flex-direction: column;
    align-items: center;
    flex: none;
    padding-top: 7px;
    text-align: center;
    white-space: nowrap;
}
.big svg {
    margin-bottom: 5px;
}
.big-text {
    line-height: 16px;
    font-size: 12px;
}
.big .chev {
    margin-top: 2px;
}
.big-cond { width: 59px; }
.big-table { width: 46px; }
.big-table svg { margin-bottom: 1px; margin-left: 14px; }
.gallery {
    display: grid;
    grid-template-columns: repeat(5, 100px);
    grid-template-rows: 22px 22px;
    gap: 6px;
    flex: none;
    width: 533px;
    height: 62px;
    margin: 2px 0 0 17px;
    padding: 5px 4px 4px 3px;
    background-color: #fff;
    border: 1px solid #b5b5b5;
}
.st {
    display: flex;
    align-items: center;
    padding: 0 0 2px 4px;
    font-size: 15px;
    white-space: nowrap;
}
.st-normal { box-shadow: 0 0 0 3px #c6c6c6; color: #000; padding-left: 1px; }
.st-bad { background-color: #ffc7ce; color: #9c0006; }
.st-good { background-color: #c6efce; color: #006100; }
.st-neutral { background-color: #ffeb9c; color: #9c5700; }
.st-calc { background-color: #f2f2f2; border: 1px solid #7f7f7f; color: #fa7d00; font-weight: 700; }
.st-check { background-color: #a5a5a5; border: 3px double #3f3f3f; color: #fff; font-weight: 700; padding-left: 1px; letter-spacing: .6px; }
.st-note { color: #7f7f7f; font-style: italic; }
.st-warn { color: #f00; }
.st-link { color: #fa7d00; border-bottom: 3px double #fa7d00; }
.st-out { background-color: #f2f2f2; border: 1px solid #3f3f3f; color: #3f3f3f; font-weight: 700; }
.gal-scroll {
    display: flex;
    flex-direction: column;
    width: 15px;
    height: 62px;
    margin-top: 2px;
    border: 1px solid #b5b5b5;
    border-left: 0;
    background-color: #fff;
}
.gal-btn {
    display: flex;
    align-items: center;
    justify-content: center;
    height: 20px;
    border-bottom: 1px solid #c6c6c6;
}
.gal-last { border-bottom: 0; }
.gal-off { background-color: #dcdcdc; }
.gal-off .tri-up { border-bottom-color: #b8b8b8; }
.tri-up, .tri-down {
    display: block;
    border: 4px solid transparent;
}
.tri-up {
    border-top: 0;
    border-bottom: 5px solid #777;
}
.tri-down {
    border-bottom: 0;
    border-top: 5px solid #666;
}
.tri-bar { position: relative; margin-top: 3px; }
.tri-bar::before {
    content: "";
    position: absolute;
    left: -4px;
    top: -8px;
    width: 8px;
    height: 1px;
    background-color: #666;
}

/* cells and editing */
.g-body-cells {
    display: flex;
    padding-left: 5px;
}
.big-cell { width: 42px; }
.big-cell:nth-child(3) { width: 40px; }
.big-fmt { padding-top: 1px; }
.g-body-edit {
    display: flex;
    padding-left: 7px;
}
.edit-list {
    display: flex;
    flex-direction: column;
    width: 92px;
    margin-top: -2px;
}
.edit-item {
    display: flex;
    align-items: center;
    gap: 3px;
    height: 23px;
    white-space: nowrap;
}
.edit-item svg { width: 16px; }
.dim { color: #666; }
.big-sort { width: 60px; padding-top: 4px; }
.big-find { width: 60px; margin-left: 5px; padding-top: 4px; }
.big-sort svg, .big-find svg { margin-bottom: 2px; }
.ribbon-fold {
    position: absolute;
    right: 9px;
    top: 90px;
    width: 7px;
    height: 7px;
    border-left: 1px solid #555;
    border-top: 1px solid #555;
    transform: rotate(45deg);
}

/* formula bar */
.formula {
    display: flex;
    align-items: flex-start;
    flex: none;
    height: 49px;
    padding: 11px 4px 0 5px;
    background-color: #e6e6e6;
    font-size: 15px;
}
.namebox {
    position: relative;
    width: 102px;
    height: 27px;
    padding-left: 7px;
    background-color: #fff;
    border: 1px solid #c6c6c6;
    border-bottom: 0;
    font: 14px/24px Lato, sans-serif;
}
.tri-name {
    position: absolute;
    right: 5px;
    top: 10px;
}
.grip {
    width: 2px;
    height: 12px;
    margin: 9px 15px 0 13px;
    border-top: 2px dotted #999;
    border-bottom: 2px dotted #999;
    background: linear-gradient(#999, #999) center / 2px 2px no-repeat;
}
.fx-box {
    display: flex;
    align-items: center;
    gap: 23px;
    width: 111px;
    height: 27px;
    padding-left: 12px;
    background-color: #fff;
    border: 1px solid #c6c6c6;
    border-bottom: 0;
}
.fx-box em {
    margin-left: -5px;
    font: italic 700 14px "Liberation Serif", serif;
    color: #666;
}
.fx-input {
    position: relative;
    flex: 1;
    height: 27px;
    margin-left: 2px;
    padding-left: 12px;
    background-color: #fff;
    border: 1px solid #c6c6c6;
    border-bottom: 0;
    line-height: 22px;
    color: #444;
}
.fx-more {
    position: absolute;
    right: 8px;
    top: 5px;
    width: 6px;
    height: 6px;
    border-right: 2px solid #666;
    border-bottom: 2px solid #666;
    transform: rotate(45deg);
}

/* sheet */
.sheet {
    display: flex;
    flex: none;
    height: 779px;
    background-color: #e6e6e6;
}
.grid-wrap {
    width: 1898px;
    height: 779px;
    overflow: hidden;
    background-color: #f2f2f2;
    border-right: 1px solid #9e9e9e;
    border-bottom: 1px solid #9e9e9e;
}
.grid {
    table-layout: fixed;
    width: 1897px;
    border-collapse: collapse;
}
.c-h { width: 37px; }
.c-60 { width: 60px; }
.c-79 { width: 79px; }
.c-82 { width: 82px; }
.c-103 { width: 103px; }
.c-126 { width: 126px; }
.c-169 { width: 169px; }
.c-481 { width: 481px; }
.c-86 { width: 86px; }
.col {
    height: 26px;
    padding: 0;
    background-color: #e6e6e6;
    border-right: 1px solid #c6c6c6;
    border-bottom: 2px solid #9e9e9e;
    font: 400 17px/20px Lato, sans-serif;
    color: #444;
}
.col-on {
    background-color: #d2d2d2;
    color: #217346;
}
.col-end {
    border-right: 0;
}
.corner {
    position: relative;
    padding: 0;
    background-color: #e6e6e6;
    border-right: 1px solid #c6c6c6;
    border-bottom: 2px solid #9e9e9e;
}
.corner i {
    position: absolute;
    right: 3px;
    bottom: 3px;
    border-style: solid;
    border-width: 0 0 17px 17px;
    border-color: transparent transparent #b5b5b5 transparent;
}
.rh {
    height: 27px;
    padding: 0;
    background-color: #e6e6e6;
    border-right: 1px solid #9e9e9e;
    font: 400 17px/20px Lato, sans-serif;
    color: #444;
}
.rh-on {
    background-color: #d2d2d2;
    color: #217346;
}
.grid td {
    height: 27px;
    padding: 0;
    text-align: center;
    white-space: nowrap;
    font-size: 20px;
    line-height: 20px;
    color: #111;
    font-weight: 300;
    border: 1px solid #000;
}
.n {
    font-family: Lato, sans-serif;
    font-size: 17.500px;
    line-height: 1;
    font-weight: 400;
}
.grid .head td {
    background-color: #528bd6;
    color: #fff;
    font-weight: 700;
    border-top: 2px solid #000;
}
.grid .head td.out {
    border: 0;
}
.grid td.last {
    border-right: 3px solid #000;
}
.grid .d-end td {
    border-bottom: 3px solid #000;
}
.grid td.sel-cell {
    position: relative;
}
.sel {
    position: absolute;
    left: -1px;
    top: -2px;
    right: -1px;
    bottom: -1px;
    border: 2px solid #217346;
    outline: 1px solid #fff;
    outline-offset: -3px;
}
.sel i {
    position: absolute;
    right: -5px;
    bottom: -5px;
    width: 7px;
    height: 7px;
    background-color: #217346;
    border: 1px solid #fff;
}
.vscroll {
    display: flex;
    flex-direction: column;
    width: 15px;
    height: 777px;
    margin: 2px 0 0 3px;
    background-color: #dcdcdc;
}
.sb-btn {
    display: flex;
    align-items: center;
    justify-content: center;
    flex: none;
    height: 15px;
    background-color: #fff;
    border: 1px solid #ababab;
}
.sb-thumb {
    flex: none;
    height: 725px;
    background-color: #fff;
    border: 1px solid #ababab;
}
.sb-track {
    flex: 1;
}

/* sheet tabs */
.sheetbar {
    display: flex;
    align-items: flex-start;
    flex: none;
    height: 28px;
    background-color: #e6e6e6;
    font-size: 13.600px;
    color: #444;
    border-bottom: 1px solid #c6c6c6;
}
.sheet-nav {
    display: flex;
    align-items: center;
    gap: 25px;
    width: 100px;
    height: 25px;
    padding-left: 27px;
}
.tri-l, .tri-r {
    display: block;
    border: 4px solid transparent;
}
.tri-l {
    border-left: 0;
    border-right: 5px solid #666;
}
.tri-r {
    border-right: 0;
    border-left: 5px solid #217346;
}
.tri-dim { border-right-color: #bbb; }
.tri-grey { border-left-color: #666; }
.stab {
    flex: none;
    width: 125px;
    height: 25px;
    line-height: 22px;
    text-align: center;
    white-space: nowrap;
    border-right: 1px solid #9e9e9e;
}
.stab-s {
    width: 117px;
}
.stab-on {
    width: 126px;
    background-color: #fff;
    color: #217346;
    border: 0;
    border-bottom: 2px solid #217346;
    margin-right: -1px;
}
.stab-more {
    width: 11px;
    margin-left: 15px;
    font: 700 14px/21px Lato, sans-serif;
    color: #217346;
}
.stab-add {
    margin: 5px 0 0 14px;
}
.grip-s {
    margin: 8px 15px 0 20px;
}
.hscroll {
    display: flex;
    width: 732px;
    height: 15px;
    margin-top: 7px;
    background-color: #dcdcdc;
}
.hs-btn {
    display: flex;
    align-items: center;
    justify-content: center;
    flex: none;
    width: 15px;
    height: 15px;
    background-color: #fff;
    border: 1px solid #ababab;
}
.hs-thumb {
    flex: none;
    width: 652px;
    background-color: #fff;
    border: 1px solid #ababab;
}
.hs-track {
    flex: 1;
}

/* status bar */
.status {
    display: flex;
    align-items: center;
    flex: none;
    height: 22px;
    padding-left: 7px;
    background-color: #f3f2f1;
    font-size: 12px;
    color: #555;
}
.ready {
    margin-top: -3px;
}
.status-right {
    display: flex;
    align-items: center;
    margin-left: auto;
    margin-right: 8px;
    height: 22px;
}
.view {
    display: flex;
    align-items: center;
    justify-content: center;
    width: 38px;
    height: 22px;
}
.view-on {
    background-color: #c6c6c6;
}
.zoom-minus, .zoom-plus {
    position: relative;
    width: 7px;
    height: 2px;
    margin-left: 4px;
    background-color: #666;
}
.zoom-plus::after {
    content: "";
    position: absolute;
    left: 2.500px;
    top: -2.500px;
    width: 2px;
    height: 7px;
    background-color: #666;
}
.zoom-track {
    position: relative;
    width: 100px;
    height: 1px;
    margin-left: 3px;
    background-color: #aaa;
}
.zoom-plus {
    margin-left: 4px;
}
.zoom-tick {
    position: absolute;
    left: 50px;
    top: -3px;
    width: 1px;
    height: 7px;
    background-color: #aaa;
}
.zoom-knob {
    position: absolute;
    left: 53px;
    top: -5px;
    width: 4px;
    height: 11px;
    background-color: #666;
}
.zoom-val {
    margin-left: 10px;
    font: 13px Lato, sans-serif;
    color: #555;
}

/* red annotation boxes on top of the screenshot */
.mark {
    position: absolute;
    pointer-events: none;
}
.mark-thin {
    left: 87px;
    top: 969px;
    width: 1145px;
    height: 49px;
    border: 1px solid #f03a3a;
}
.mark-thick {
    left: 89px;
    top: 976px;
    width: 1097px;
    height: 49px;
    border: 7px solid #ff3a3a;
}
```
